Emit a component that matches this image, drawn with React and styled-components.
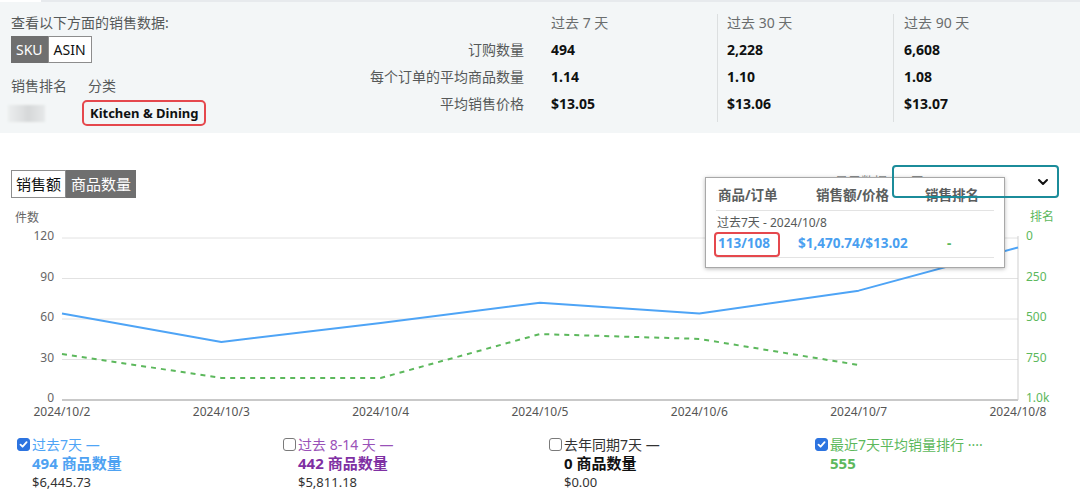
import React from 'react';
import styled, { createGlobalStyle } from 'styled-components';

const GlobalStyle = createGlobalStyle`
    body {
        margin: 0;
        background: #fff;
        font-family: "Noto Sans", "Noto Sans CJK SC", sans-serif;
        color: #0f1111;
    }
`;

const TopStrip = styled.div`
    height: 2px;
    margin-left: 41px;
    background: #e7eaed;
`;

const Summary = styled.section`
    display: flex;
    height: 131px;
    box-sizing: border-box;
    padding-top: 12px;
    background: #f3f6f7;
`;

const LeftPane = styled.div`
    width: 340px;
    padding-left: 11px;
    box-sizing: border-box;
`;

const Prompt = styled.div`
    font-size: 14px;
    line-height: 17px;
    color: #565959;
`;

const Toggle = styled.div`
    display: inline-flex;
    margin-top: ${(p) => p.$top || 0}px;
`;

const ToggleButton = styled.span`
    display: block;
    padding: 0 ${(p) => p.$pad || 4}px;
    font-size: ${(p) => p.$size || 14}px;
    line-height: ${(p) => p.$height || 25}px;
    border: 1px solid ${(p) => (p.$active ? '#6f6f6f' : '#8d8d8d')};
    background: ${(p) => (p.$active ? '#6f6f6f' : '#fff')};
    color: ${(p) => (p.$active ? '#fff' : '#0f1111')};
`;

const RankHeader = styled.div`
    display: flex;
    gap: 21px;
    margin-top: 15px;
    font-size: 14px;
    line-height: 16px;
    color: #565959;
`;

const RankRow = styled.div`
    display: flex;
    align-items: center;
    margin-top: 6px;
`;

const BlurChip = styled.div`
    width: 37px;
    height: 17px;
    margin-left: -3px;
    background: linear-gradient(90deg, #eceeef 0%, #e1e3e4 30%, #d6d8d9 55%, #e7e9ea 100%);
    filter: blur(1px);
`;

const CategoryBox = styled.div`
    margin-left: 37px;
    height: 26px;
    box-sizing: border-box;
    padding: 0 6px;
    border: 2px solid #e5484d;
    border-radius: 5px;
    font-size: 13px;
    font-weight: 700;
    line-height: 22px;
    color: #0f1111;
`;

const RightPane = styled.div`
    display: flex;
    align-items: flex-start;
`;

const Column = styled.div`
    display: flex;
    flex-direction: column;
    width: ${(p) => p.$width}px;
    box-sizing: border-box;
    padding-left: ${(p) => p.$padLeft || 0}px;
    padding-bottom: 5px;
    text-align: ${(p) => (p.$right ? 'right' : 'left')};
    border-left: ${(p) => (p.$divider ? '1px solid #dcdfe0' : 'none')};
`;

const HeadCell = styled.div`
    height: 17px;
    margin-bottom: 5px;
    font-size: 14px;
    line-height: 17px;
    color: #6a6d6d;
`;

const Cell = styled.div`
    height: 27px;
    font-size: 14px;
    line-height: 27px;
    font-weight: ${(p) => (p.$bold ? 700 : 400)};
    color: ${(p) => (p.$bold ? '#0f1111' : '#565959')};
`;

const ChartSection = styled.section`
    position: relative;
    padding-top: 37px;
`;

const MetricToggle = styled(Toggle)`
    margin-left: 11px;
`;

const ChartSvg = styled.svg`
    display: block;
`;

const RangeLabel = styled.div`
    position: absolute;
    left: 835px;
    top: 38px;
    font-size: 13px;
    color: #8a8d8d;
`;

const Dropdown = styled.div`
    position: absolute;
    z-index: 3;
    left: 892px;
    top: 32px;
    width: 167px;
    height: 33px;
    box-sizing: border-box;
    border: 2px solid #1b8c9a;
    border-radius: 4px;
    display: flex;
    align-items: center;
    justify-content: flex-end;
    padding-right: 7px;
`;

const Tooltip = styled.div`
    position: absolute;
    z-index: 2;
    left: 705px;
    top: 44px;
    width: 300px;
    height: 91px;
    box-sizing: border-box;
    padding: 0 10px;
    background: #fff;
    border: 1px solid #a8a8a8;
    box-shadow: 0 1px 4px rgba(0, 0, 0, 0.28);
`;

const TipHeader = styled.div`
    display: grid;
    grid-template-columns: 98px 109px 1fr;
    height: 30px;
    padding: 2px 0 0 2px;
    line-height: 30px;
    font-size: 13.5px;
    font-weight: 700;
    color: #5a5d5d;
    border-bottom: 1px solid #e3e3e3;
`;

const TipSub = styled.div`
    padding-left: 1px;
    font-size: 12px;
    line-height: 24px;
    color: #565959;
`;

const TipValues = styled.div`
    display: grid;
    grid-template-columns: 80px 149px 1fr;
    padding: 0 0 6px 2px;
    font-size: 13.5px;
    font-weight: 700;
    line-height: 16px;
    border-bottom: 1px solid #e3e3e3;
`;

const TipValue = styled.span`
    color: ${(p) => p.$color};
`;

const Highlighted = styled(TipValue)`
    position: relative;
    &::after {
        content: '';
        position: absolute;
        left: -4px;
        top: -3px;
        width: 66px;
        height: 25px;
        box-sizing: border-box;
        border: 2px solid #e5484d;
        border-radius: 4px;
    }
`;

const Legend = styled.div`
    display: grid;
    grid-template-columns: repeat(4, 266px);
    margin-top: 16px;
    padding-left: 17px;
`;

const LegendItem = styled.div`
    display: grid;
    grid-template-columns: 15px 1fr;
`;

const Check = styled.span`
    display: flex;
    align-items: center;
    justify-content: center;
    width: 13px;
    height: 13px;
    margin-top: 2px;
    box-sizing: border-box;
    border-radius: 3px;
    border: 1px solid ${(p) => (p.$checked ? '#2d74e0' : '#7a7a7a')};
    background: ${(p) => (p.$checked ? '#2d74e0' : '#fff')};
`;

const LegendText = styled.div`
    display: flex;
    flex-direction: column;
`;

const LegendLabel = styled.div`
    font-size: 14px;
    line-height: 18px;
    color: ${(p) => p.$color};
`;

const LegendValue = styled.div`
    font-size: 15px;
    font-weight: 700;
    line-height: 19px;
    color: ${(p) => p.$color};
`;

const LegendSub = styled.div`
    font-size: 13px;
    line-height: 18px;
    color: #333;
`;

const periods = [
    { head: '过去 7 天', values: ['494', '1.14', '$13.05'], width: 193, pad: 27 },
    { head: '过去 30 天', values: ['2,228', '1.10', '$13.06'], width: 176, pad: 9, divider: true },
    { head: '过去 90 天', values: ['6,608', '1.08', '$13.07'], width: 176, pad: 10, divider: true },
];

const rowLabels = ['订购数量', '每个订单的平均商品数量', '平均销售价格'];

const dates = ['2024/10/2', '2024/10/3', '2024/10/4', '2024/10/5', '2024/10/6', '2024/10/7', '2024/10/8'];
const units = [64, 43, 57, 72, 64, 81, 113];
const ranks = [716, 864, 864, 593, 623, 784];

const X0 = 62;
const X1 = 1018;
const xAt = (i) => X0 + ((X1 - X0) * i) / 6;
const yUnits = (v) => 202 - v * 1.35;
const yRank = (r) => 40 + r * 0.162;

const leftTicks = [120, 90, 60, 30, 0];
const rightTicks = ['0', '250', '500', '750', '1.0k'];

const legend = [
    { label: '过去7天 —', color: '#4fa5f6', valueColor: '#4ea2f2', value: '494 商品数量', sub: '$6,445.73', checked: true },
    { label: '过去 8-14 天 —', color: '#9a52b8', valueColor: '#7f30a3', value: '442 商品数量', sub: '$5,811.18' },
    { label: '去年同期7天 —', color: '#333', valueColor: '#111', value: '0 商品数量', sub: '$0.00' },
    { label: '最近7天平均销量排行 ····', color: '#5cb85c', valueColor: '#5cb85c', value: '555', checked: true },
];

const Chart = () => {
    const blue = units.map((v, i) => `${xAt(i)},${yUnits(v)}`).join(' ');
    const green = ranks.map((r, i) => `${xAt(i)},${yRank(r)}`).join(' ');
    return (
        <ChartSvg width="1080" height="222" viewBox="0 0 1080 222">
            <text x="15" y="21" fontSize="12" fill="#666" dominantBaseline="middle">件数</text>
            <text x="1030" y="20" fontSize="12" fill="#5cb85c" dominantBaseline="middle">排名</text>
            {leftTicks.map((t, i) => {
                const y = yUnits(t);
                return (
                    <g key={t}>
                        <line x1={X0} x2={X1} y1={y} y2={y} stroke={t === 0 ? '#c9c9c9' : '#e2e2e2'} strokeWidth={t === 0 ? 2 : 1} />
                        <text x="54" y={y - 1} fontSize="12" fill="#666" textAnchor="end" dominantBaseline="middle">{t}</text>
                        <text x="1026" y={y - 1} fontSize="12" fill="#5cb85c" dominantBaseline="middle">{rightTicks[i]}</text>
                    </g>
                );
            })}
            <line x1={X1} x2={X1} y1="38" y2="202" stroke="#cfcfcf" />
            <polyline points={green} fill="none" stroke="#5cb85c" strokeWidth="2" strokeDasharray="5 5" />
            <polyline points={blue} fill="none" stroke="#4ea4f6" strokeWidth="2" strokeLinejoin="round" />
            {dates.map((d, i) => (
                <text key={d} x={xAt(i)} y="215" fontSize="12" fill="#555" textAnchor="middle" dominantBaseline="middle">{d}</text>
            ))}
        </ChartSvg>
    );
};

const App = () => (
    <>
        <GlobalStyle />
        <TopStrip />
        <Summary>
            <LeftPane>
                <Prompt>查看以下方面的销售数据:</Prompt>
                <Toggle $top={5}>
                    <ToggleButton $active>SKU</ToggleButton>
                    <ToggleButton $pad={5}>ASIN</ToggleButton>
                </Toggle>
                <RankHeader>
                    <span>销售排名</span>
                    <span>分类</span>
                </RankHeader>
                <RankRow>
                    <BlurChip />
                    <CategoryBox>Kitchen &amp; Dining</CategoryBox>
                </RankRow>
            </LeftPane>
            <RightPane>
                <Column $width={184} $right>
                    <HeadCell />
                    {rowLabels.map((l) => <Cell key={l}>{l}</Cell>)}
                </Column>
                {periods.map((p) => (
                    <Column key={p.head} $width={p.width} $padLeft={p.pad} $divider={p.divider}>
                        <HeadCell>{p.head}</HeadCell>
                        {p.values.map((v, i) => <Cell key={i} $bold>{v}</Cell>)}
                    </Column>
                ))}
            </RightPane>
        </Summary>
        <ChartSection>
            <MetricToggle>
                <ToggleButton $size={15} $height={26}>销售额</ToggleButton>
                <ToggleButton $size={15} $height={26} $active>商品数量</ToggleButton>
            </MetricToggle>
            <RangeLabel>显示数据：7 天</RangeLabel>
            <Dropdown>
                <svg width="14" height="14" viewBox="0 0 14 14">
                    <path d="M3 5 L7 9 L11 5" fill="none" stroke="#111" strokeWidth="2" strokeLinecap="round" strokeLinejoin="round" />
                </svg>
            </Dropdown>
            <Tooltip>
                <TipHeader>
                    <span>商品/订单</span>
                    <span>销售额/价格</span>
                    <span>销售排名</span>
                </TipHeader>
                <TipSub>过去7天 - 2024/10/8</TipSub>
                <TipValues>
                    <Highlighted $color="#4a9ff0">113/108</Highlighted>
                    <TipValue $color="#4a9ff0">$1,470.74/$13.02</TipValue>
                    <TipValue $color="#5cb85c">-</TipValue>
                </TipValues>
            </Tooltip>
            <Chart />
            <Legend>
                {legend.map((item) => (
                    <LegendItem key={item.label}>
                        <Check $checked={item.checked}>
                            {item.checked && (
                                <svg width="9" height="9" viewBox="0 0 9 9">
                                    <path d="M1.5 4.6 L3.6 6.7 L7.6 2.2" fill="none" stroke="#fff" strokeWidth="1.8" strokeLinecap="round" strokeLinejoin="round" />
                                </svg>
                            )}
                        </Check>
                        <LegendText>
                            <LegendLabel $color={item.color}>{item.label}</LegendLabel>
                            <LegendValue $color={item.valueColor}>{item.value}</LegendValue>
                            {item.sub && <LegendSub>{item.sub}</LegendSub>}
                        </LegendText>
                    </LegendItem>
                ))}
            </Legend>
        </ChartSection>
    </>
);

export default App;
